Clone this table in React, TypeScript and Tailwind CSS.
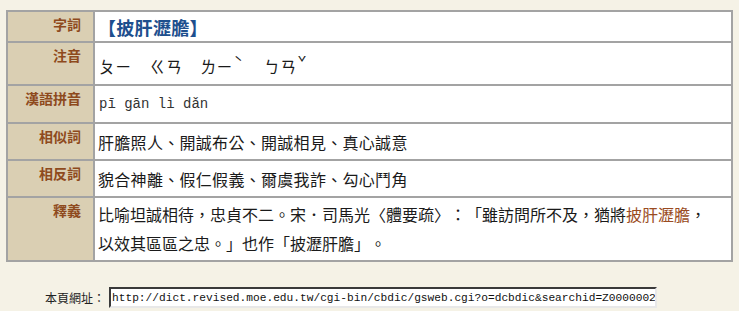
import React from "react";

const cjk = { fontFamily: '"Noto Sans CJK TC", "Noto Sans", sans-serif' };
const mono = { fontFamily: '"Liberation Mono", "DejaVu Sans Mono", monospace' };

function Row({
  label,
  h,
  first,
  children,
}: {
  label: string;
  h: string;
  first?: boolean;
  children: React.ReactNode;
}) {
  return (
    <div className={`flex ${first ? "" : "border-t-2 border-[#a3a3a3]"} ${h}`}>
      <div
        className="w-[87px] shrink-0 bg-[#dacfb3] border-r-2 border-[#a3a3a3] text-right pr-[12px] pt-[3px] text-[14px] leading-[18px] font-bold text-[#8e4a1d]"
        style={cjk}
      >
        {label}
      </div>
      <div
        className="flex-1 bg-white pl-[3px] flex items-center text-[16px] tracking-[0.3px] text-[#1a1a1a] [text-spacing-trim:space-all]"
        style={cjk}
      >
        {children}
      </div>
    </div>
  );
}

function Syl({ s, tone }: { s: string; tone?: string }) {
  return (
    <span className="inline-flex items-start">
      <span className="leading-[20px] mt-[3px]">{s}</span>
      {tone ? <span className="text-[15px] leading-[14px] w-[13px] mt-[2px] pl-[1px]">{tone}</span> : null}
    </span>
  );
}

export default function App() {
  return (
    <div className="w-[739px] h-[311px] bg-[#f5f2e6] pt-[10px] pl-[6px]">
      <div className="w-[727px] border-2 border-[#a3a3a3]">
        <Row label="字詞" h="h-[29px]" first>
          <span className="text-[18px] font-bold text-[#1d4f8e] leading-[24px]">【披肝瀝膽】</span>
        </Row>
        <Row label="注音" h="h-[43px]">
          <div className="flex gap-[18px] pl-[1px] pt-[2px]">
            <Syl s="ㄆㄧ" />
            <Syl s="ㄍㄢ" />
            <Syl s="ㄌㄧ" tone="ˋ" />
            <Syl s="ㄅㄢ" tone="ˇ" />
          </div>
        </Row>
        <Row label="漢語拼音" h="h-[38px]">
          <span className="text-[14px] tracking-normal text-[#333] pl-[1px]" style={mono}>
            pī gān lì dǎn
          </span>
        </Row>
        <Row label="相似詞" h="h-[37px]">
          <span>肝膽照人、開誠布公、開誠相見、真心誠意</span>
        </Row>
        <Row label="相反詞" h="h-[37px]">
          <span>貌合神離、假仁假義、爾虞我詐、勾心鬥角</span>
        </Row>
        <Row label="釋義" h="h-[64px]">
          <div className="self-start pt-[2px] leading-[29px] whitespace-nowrap tracking-normal">
            比喻坦誠相待，忠貞不二。宋．司馬光〈體要疏〉：「雖訪問所不及，猶將
            <span className="text-[#9a4b22]">披肝瀝膽</span>，
            <br />
            以效其區區之忠。」也作「披瀝肝膽」。
          </div>
        </Row>
      </div>
      <div className="flex items-center mt-[25px] pl-[39px]">
        <span className="text-[12px] text-[#222] leading-[14px]" style={cjk}>
          本頁網址：
        </span>
        <div className="ml-[4px] w-[548px] h-[21px] border-2 border-t-[#3a3a3a] border-l-[#3a3a3a] border-b-[#e8e8e8] border-r-[#e8e8e8] bg-white flex items-center pl-[1px] overflow-hidden">
          <span className="text-[11.2px] text-[#111] whitespace-nowrap leading-[16px]" style={mono}>
            http://dict.revised.moe.edu.tw/cgi-bin/cbdic/gsweb.cgi?o=dcbdic&amp;searchid=Z0000002
          </span>
        </div>
      </div>
    </div>
  );
}
